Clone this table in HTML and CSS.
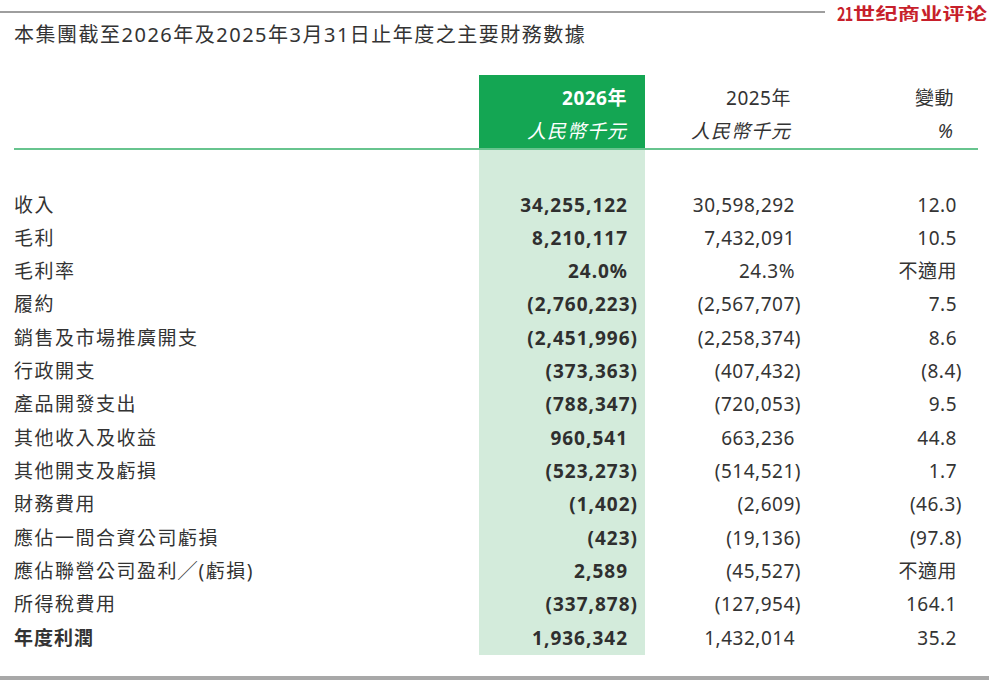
FILE: index.html
```html
<!DOCTYPE html>
<html lang="zh-Hant">
<head>
<meta charset="utf-8">
<title>主要財務數據</title>
<link rel="stylesheet" href="styles.css">
</head>
<body>
<div class="page">
  <div class="topbar">
    <div class="rule"></div>
    <div class="logo"><span class="logo-num">21</span><span class="logo-cn">世纪商业评论</span></div>
  </div>
  <h1 class="title">本集團截至2026年及2025年3月31日止年度之主要財務數據</h1>
  <table class="fin">
    <colgroup>
      <col class="c-label"><col class="c-cur"><col class="c-prev"><col class="c-chg">
    </colgroup>
    <thead>
      <tr>
        <th class="h-label"></th>
        <th class="h-cur"><div class="yr">2026年</div><div class="unit">人民幣千元</div></th>
        <th class="h-prev"><div class="yr">2025年</div><div class="unit">人民幣千元</div></th>
        <th class="h-chg"><div class="yr">變動</div><div class="unit">%</div></th>
      </tr>
    </thead>
    <tbody>
      <tr class="spacer"><td></td><td class="cur"></td><td></td><td></td></tr>
      <tr><td class="lbl">收入</td><td class="cur">34,255,122</td><td class="prev">30,598,292</td><td class="chg">12.0</td></tr>
      <tr><td class="lbl">毛利</td><td class="cur">8,210,117</td><td class="prev">7,432,091</td><td class="chg">10.5</td></tr>
      <tr><td class="lbl">毛利率</td><td class="cur">24.0%</td><td class="prev">24.3%</td><td class="chg">不適用</td></tr>
      <tr><td class="lbl">履約</td><td class="cur"><span class="neg">(2,760,223)</span></td><td class="prev"><span class="neg">(2,567,707)</span></td><td class="chg">7.5</td></tr>
      <tr><td class="lbl">銷售及市場推廣開支</td><td class="cur"><span class="neg">(2,451,996)</span></td><td class="prev"><span class="neg">(2,258,374)</span></td><td class="chg">8.6</td></tr>
      <tr><td class="lbl">行政開支</td><td class="cur"><span class="neg">(373,363)</span></td><td class="prev"><span class="neg">(407,432)</span></td><td class="chg"><span class="neg">(8.4)</span></td></tr>
      <tr><td class="lbl">產品開發支出</td><td class="cur"><span class="neg">(788,347)</span></td><td class="prev"><span class="neg">(720,053)</span></td><td class="chg">9.5</td></tr>
      <tr><td class="lbl">其他收入及收益</td><td class="cur">960,541</td><td class="prev">663,236</td><td class="chg">44.8</td></tr>
      <tr><td class="lbl">其他開支及虧損</td><td class="cur"><span class="neg">(523,273)</span></td><td class="prev"><span class="neg">(514,521)</span></td><td class="chg">1.7</td></tr>
      <tr><td class="lbl">財務費用</td><td class="cur"><span class="neg">(1,402)</span></td><td class="prev"><span class="neg">(2,609)</span></td><td class="chg"><span class="neg">(46.3)</span></td></tr>
      <tr><td class="lbl">應佔一間合資公司虧損</td><td class="cur"><span class="neg">(423)</span></td><td class="prev"><span class="neg">(19,136)</span></td><td class="chg"><span class="neg">(97.8)</span></td></tr>
      <tr><td class="lbl">應佔聯營公司盈利╱(虧損)</td><td class="cur">2,589</td><td class="prev"><span class="neg">(45,527)</span></td><td class="chg">不適用</td></tr>
      <tr><td class="lbl">所得稅費用</td><td class="cur"><span class="neg">(337,878)</span></td><td class="prev"><span class="neg">(127,954)</span></td><td class="chg">164.1</td></tr>
      <tr class="total"><td class="lbl">年度利潤</td><td class="cur">1,936,342</td><td class="prev">1,432,014</td><td class="chg">35.2</td></tr>
    </tbody>
  </table>
  <div class="bottom-rule"></div>
</div>
</body>
</html>
```

FILE: styles.css
```css
html, body {
  margin: 0;
  padding: 0;
  background: #ffffff;
}

body {
  font-family: "Noto Sans", "Noto Sans CJK TC", sans-serif;
  color: #343434;
}

.page {
  width: 989px;
  height: 680px;
  overflow: hidden;
  position: relative;
}

/* top bar with rule and logo */
.topbar {
  display: flex;
  align-items: center;
  height: 23px;
}

.rule {
  width: 825px;
  height: 2px;
  background: #9e9e9e;
  margin-top: 1px;
  flex: none;
}

.logo {
  display: flex;
  align-items: center;
  margin-left: 12px;
  padding-top: 3px;
  color: #c71f2b;
  font-family: "Noto Sans CJK SC", sans-serif;
  font-weight: 700;
  white-space: nowrap;
  line-height: 17px;
  flex: none;
}

.logo-num {
  display: inline-block;
  width: 16px;
  font-size: 18px;
  letter-spacing: -1px;
  transform: scaleX(0.8);
  transform-origin: left center;
}

.logo-cn {
  display: inline-block;
  width: 140px;
  font-size: 16.5px;
  letter-spacing: 0.2px;
  transform: scaleX(1.34);
  transform-origin: left center;
}

/* title */
.title {
  margin: 0 0 0 14px;
  font-size: 20px;
  font-weight: 400;
  letter-spacing: 1.5px;
  line-height: 24px;
  color: #333333;
}

/* table */
.fin {
  margin: 28px 0 0 14px;
  border-collapse: collapse;
  table-layout: fixed;
  width: 964px;
}

.c-label { width: 465px; }
.c-cur { width: 166px; }
.c-prev { width: 166px; }
.c-chg { width: 167px; }

.fin th {
  padding: 7px 0 0 0;
  vertical-align: top;
  text-align: right;
  font-weight: 400;
  font-size: 19px;
  line-height: 33px;
  border-bottom: 2px solid #67c48e;
  color: #333333;
}

.fin th .unit {
  font-style: italic;
  letter-spacing: 1px;
}

.fin th .yr {
  letter-spacing: 0.5px;
}

.h-cur {
  background: #14a653;
  color: #ffffff !important;
  padding-right: 18px !important;
}

.h-cur .yr {
  font-weight: 700;
}

.h-prev {
  padding-right: 20px !important;
}

.h-chg {
  padding-right: 24px !important;
}

.fin td {
  padding: 0;
  height: 33.33px;
  line-height: 33.33px;
  font-size: 19px;
  white-space: nowrap;
}

.fin .spacer td {
  height: 38.5px;
  line-height: 38.5px;
}

.fin td.cur {
  background: #d3ebdb;
}

.lbl {
  text-align: left;
  letter-spacing: 1.5px;
  color: #333333;
}

.cur, .prev, .chg {
  text-align: right;
}

.cur {
  padding-right: 17px !important;
  font-weight: 700;
  letter-spacing: 1px;
  color: #2f2f2f;
}

.prev {
  padding-right: 16px !important;
  letter-spacing: 0.5px;
}

.chg {
  padding-right: 21px !important;
  letter-spacing: 0.5px;
}

.cur .neg {
  margin-right: -10px;
}

.prev .neg {
  margin-right: -6px;
}

.chg .neg {
  margin-right: -5px;
}

.total .lbl {
  font-weight: 700;
  letter-spacing: 1px;
}

.bottom-rule {
  margin-top: 21px;
  height: 4px;
  background: #a8a8a8;
}
```
